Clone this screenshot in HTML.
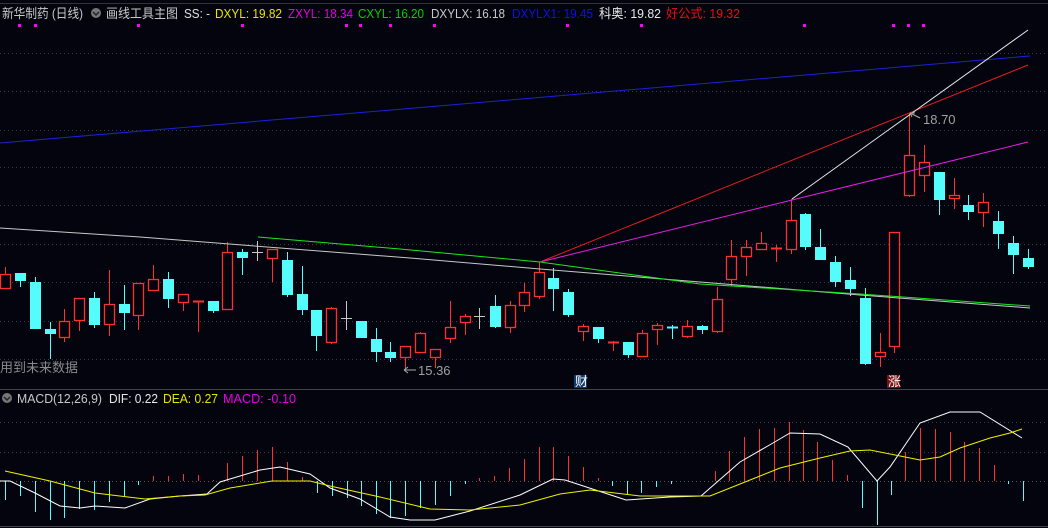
<!DOCTYPE html>
<html><head><meta charset="utf-8">
<style>
html,body{margin:0;padding:0;background:#04040e;width:1048px;height:528px;overflow:hidden}
svg{position:absolute;left:0;top:0}
.t{font-family:"Liberation Sans","Noto Sans CJK SC",sans-serif;font-size:13px}
</style></head>
<body>
<svg id="s" width="1048" height="528" xmlns="http://www.w3.org/2000/svg">
<line x1="0" y1="3.5" x2="1048" y2="3.5" stroke="#333"/>
<g stroke="#3a3a44" stroke-dasharray="1,3">
<line x1="0" y1="53.5" x2="1048" y2="53.5"/><line x1="0" y1="91.5" x2="1048" y2="91.5"/>
<line x1="0" y1="130.5" x2="1048" y2="130.5"/><line x1="0" y1="167.5" x2="1048" y2="167.5"/>
<line x1="0" y1="205.5" x2="1048" y2="205.5"/><line x1="0" y1="244.5" x2="1048" y2="244.5"/>
<line x1="0" y1="282.5" x2="1048" y2="282.5"/><line x1="0" y1="321.5" x2="1048" y2="321.5"/>
<line x1="0" y1="359.5" x2="1048" y2="359.5"/>
<line x1="0" y1="422.5" x2="1048" y2="422.5"/><line x1="0" y1="452.5" x2="1048" y2="452.5"/>
<line x1="0" y1="481.5" x2="1048" y2="481.5" stroke="#555"/>
</g>
<line x1="0" y1="389.5" x2="1048" y2="389.5" stroke="#444"/>
<line x1="0" y1="526.5" x2="1048" y2="526.5" stroke="#444"/>
<g id="c"></g>
<polyline fill="none" stroke="#1a22d8" points="0,143 1030,56"/>
<polyline fill="none" stroke="#c8c8c8" points="0,228 140,237 280,248 410,258 540,269 700,282 860,295 1030,308"/>
<polyline fill="none" stroke="#1ee81e" points="258,237 400,249 540,262 700,284 860,294 1030,306"/>
<polyline fill="none" stroke="#e81e1e" points="540,262 1028,65"/>
<polyline fill="none" stroke="#e81ee8" points="540,262 1028,142"/>
<polyline fill="none" stroke="#e8e8e8" points="792,199 1028,30"/>
<g id="m"></g>
<polyline fill="none" stroke="#fff" points="0,481 10,481 35,493 60,506 80,508 95,506 125,508 150,499 180,496 207,494 220,482 260,470 280,467 310,474 330,488 360,499 390,517 410,520 435,520 470,511 520,495 553,479 565,480 626,500 670,497 701,496 740,462 773,443 790,433 820,434 848,447 877,481 890,467 920,423 950,412 980,412 1022,438"/>
<polyline fill="none" stroke="#f0f000" points="5,471 50,481 95,493 145,499 180,496 205,495 230,488 272,481 310,481 330,486 380,497 430,509 470,510 520,505 560,494 590,490 640,496 710,496 740,484 780,468 820,458 850,451 870,450 900,456 920,460 940,457 960,448 990,438 1010,433 1022,429"/>
<g class="t">
<text x="2" y="18" fill="#c8c8c8" textLength="81" lengthAdjust="spacingAndGlyphs">新华制药 (日线)</text>
<circle cx="96" cy="13" r="5" fill="#777"/><path d="M93 12 L96 15 L99 12" stroke="#222" fill="none" stroke-width="1.5"/>
<text x="106" y="18" fill="#c8c8c8" textLength="72" lengthAdjust="spacingAndGlyphs">画线工具主图</text>
<text x="184" y="18" fill="#e0e0e0" textLength="26" lengthAdjust="spacingAndGlyphs">SS: -</text>
<text x="215" y="18" fill="#e6e600" textLength="67" lengthAdjust="spacingAndGlyphs">DXYL: 19.82</text>
<text x="288" y="18" fill="#e600e6" textLength="65" lengthAdjust="spacingAndGlyphs">ZXYL: 18.34</text>
<text x="358" y="18" fill="#00d200" textLength="66" lengthAdjust="spacingAndGlyphs">CXYL: 16.20</text>
<text x="431" y="18" fill="#c8c8c8" textLength="74" lengthAdjust="spacingAndGlyphs">DXYLX: 16.18</text>
<text x="512" y="18" fill="#1010e6" textLength="81" lengthAdjust="spacingAndGlyphs">DXYLX1: 19.45</text>
<text x="599" y="18" fill="#e8e8e8" textLength="62" lengthAdjust="spacingAndGlyphs">科奥: 19.82</text>
<text x="666" y="18" fill="#e61010" textLength="74" lengthAdjust="spacingAndGlyphs">好公式: 19.32</text>
<text x="0" y="372" fill="#8a8a8a">用到未来数据</text>
<text x="418" y="375" fill="#a0a0a0">15.36</text>
<text x="923" y="124" fill="#a0a0a0">18.70</text>
<circle cx="7" cy="398" r="5" fill="#777"/><path d="M4 397 L7 400 L10 397" stroke="#222" fill="none" stroke-width="1.5"/>
<text x="17" y="403" fill="#c8c8c8" textLength="85" lengthAdjust="spacingAndGlyphs">MACD(12,26,9)</text>
<text x="109" y="403" fill="#e8e8e8" textLength="49" lengthAdjust="spacingAndGlyphs">DIF: 0.22</text>
<text x="163" y="403" fill="#e6e600" textLength="55" lengthAdjust="spacingAndGlyphs">DEA: 0.27</text>
<text x="223" y="403" fill="#e600e6" textLength="73" lengthAdjust="spacingAndGlyphs">MACD: -0.10</text>
</g>
<path d="M404 370 H416 M404 370 l4 -3 M404 370 l4 3" stroke="#aaa" fill="none"/>
<path d="M910 113 L920 118 M910 113 l5 0 M910 113 l2 4" stroke="#aaa" fill="none"/>
<rect x="574" y="375" width="13" height="13" fill="#103a6a"/><text x="575" y="386" class="t" font-size="11" fill="#fff">财</text>
<rect x="887" y="375" width="13" height="13" fill="#7a1010"/><text x="888" y="386" class="t" font-size="11" fill="#fff">涨</text>
</svg>
<script>
var C=[[5,'r',274,288,267,288],[20,'c',273,281,273,287],[35,'c',282,329,277,329],[50,'c',329,334,322,359],[64,'r',321,337,309,342],[79,'r',298,320,298,331],[94,'c',298,325,292,328],[109,'r',304,324,270,336],[124,'c',304,313,285,330],[138,'r',283,315,283,330],[153,'r',279,290,265,290],[168,'c',279,299,272,308],[183,'r',294,302,294,311],[198,'r',301,302,301,332],[213,'c',301,311,301,313],[227,'r',252,309,242,310],[242,'c',252,258,249,275],[257,'g',252,252,241,261],[272,'r',249,258,249,282],[287,'c',260,295,252,297],[302,'c',294,310,266,315],[316,'c',310,336,310,351],[331,'r',308,342,307,344],[346,'g',318,318,301,330],[361,'c',321,338,321,338],[376,'c',339,352,328,362],[390,'c',352,358,342,362],[405,'r',346,357,346,370],[420,'r',333,352,332,353],[435,'r',349,357,349,368],[450,'r',327,338,301,343],[465,'r',316,322,314,335],[479,'g',316,316,308,329],[495,'c',306,327,295,328],[510,'r',305,327,301,333],[524,'r',292,305,283,312],[539,'r',272,296,262,299],[553,'c',278,289,268,311],[568,'c',292,315,289,317],[583,'r',326,331,324,341],[598,'c',327,339,327,343],[613,'r',342,343,341,351],[628,'c',342,355,342,358],[642,'r',333,356,330,356],[657,'r',325,329,323,345],[672,'c',327,327,325,339],[687,'r',326,336,320,338],[702,'c',326,330,325,334],[717,'r',299,331,287,333],[731,'r',256,279,240,286],[746,'r',247,256,240,276],[761,'r',243,249,232,250],[776,'r',248,249,245,262],[791,'r',220,249,199,254],[805,'c',214,247,213,250],[820,'c',247,260,229,260],[835,'c',262,282,256,287],[850,'c',280,289,267,296],[865,'c',298,364,288,365],[880,'r',352,356,333,367],[894,'r',232,346,232,353],[909,'r',155,195,113,197],[924,'r',162,175,145,192],[939,'c',172,200,172,215],[954,'r',195,198,178,209],[968,'c',205,212,195,220],[983,'r',202,212,193,227],[998,'c',221,234,211,249],[1013,'c',243,255,236,274],[1028,'c',258,267,249,269]];
var h='';
C.forEach(function(k){var x=k[0],col=k[1]=='r'?'#ff3030':k[1]=='c'?'#54fcfc':'#c8c8c8';
h+='<line x1="'+(x+.5)+'" y1="'+k[4]+'" x2="'+(x+.5)+'" y2="'+k[5]+'" stroke="'+col+'"/>';
if(k[1]=='g'||k[3]-k[2]<2){h+='<line x1="'+(x-5)+'" y1="'+(k[2]+.5)+'" x2="'+(x+6)+'" y2="'+(k[2]+.5)+'" stroke="'+col+'" stroke-width="'+(k[1]=='g'?1:2)+'"/>';}
else if(k[1]=='r'){h+='<rect x="'+(x-4.5)+'" y="'+(k[2]+.5)+'" width="10" height="'+(k[3]-k[2])+'" fill="#04040e" stroke="'+col+'" stroke-width="1.3"/>';}
else{h+='<rect x="'+(x-5)+'" y="'+k[2]+'" width="11" height="'+(k[3]-k[2])+'" fill="'+col+'"/>';}
});
document.getElementById('c').innerHTML=h;
var M=[[5,500],[20,496],[35,512],[50,520],[64,518],[79,509],[94,510],[109,502],[124,496],[138,485],[153,476],[168,476],[183,474],[198,475],[213,480],[227,463],[242,456],[257,450],[272,447],[287,462],[302,477],[317,493],[332,496],[347,498],[361,506],[376,514],[390,518],[405,516],[420,508],[435,505],[450,496],[465,484],[479,478],[494,476],[509,468],[524,459],[539,447],[553,447],[568,456],[583,467],[598,478],[612,486],[627,495],[641,493],[656,487],[671,484],[715,471],[729,451],[744,437],[759,429],[774,428],[789,422],[803,430],[817,442],[832,460],[847,475],[862,508],[877,525],[891,495],[905,452],[920,428],[935,429],[950,432],[964,442],[979,448],[994,465],[1008,484],[1023,501]];
var g='';M.forEach(function(m){g+='<line x1="'+(m[0]+.5)+'" y1="481" x2="'+(m[0]+.5)+'" y2="'+m[1]+'" stroke="'+(m[1]<481?'#ff3030':'#54fcfc')+'"/>';});
[19,35,138,242,346,360,390,434,567,641,804,893,908,923].forEach(function(x){g+='<rect x="'+(x-1)+'" y="24" width="3" height="3" fill="#ff00ff"/>';});
document.getElementById('m').innerHTML=g;
</script>
</body></html>
